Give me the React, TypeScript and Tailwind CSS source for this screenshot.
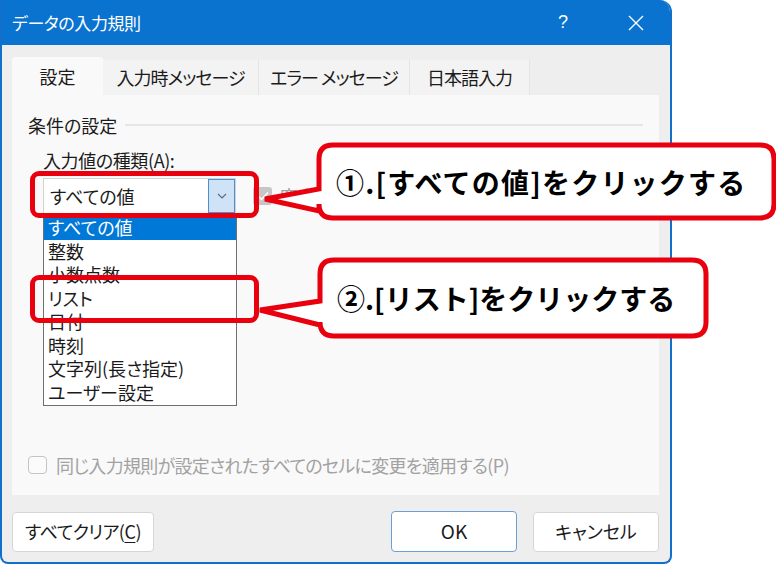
import React from "react";

const ui = "font-['Noto_Sans_CJK_JP','Noto_Sans',sans-serif] [font-feature-settings:'palt']";

function Tab({ label, active, w }: { label: string; active?: boolean; w: number }) {
  return (
    <div
      style={{ width: w }}
      className={
        active
          ? "h-[38px] bg-[#f9f9f9] flex items-center justify-center text-[18px] text-[#1b1b1b] rounded-t-[3px]"
          : "h-[35px] mt-[3px] bg-[#f3f3f3] border-r border-[#e4e4e4] flex items-center justify-center text-[18px] text-[#1b1b1b] tracking-[-1px]"
      }
    >
      {label}
    </div>
  );
}

function Callout({
  left,
  top,
  width,
  height,
  tipX,
  tipY,
  y1,
  y2,
  text,
  wide,
}: {
  left: number;
  top: number;
  width: number;
  height: number;
  tipX: number;
  tipY: number;
  y1: number;
  y2: number;
  text: string;
  wide?: boolean;
}) {
  const r = 14;
  const x0 = left;
  const x1 = left + width;
  const t = top;
  const b = top + height;
  const d = `M ${x0 + r} ${t} L ${x1 - r} ${t} Q ${x1} ${t} ${x1} ${t + r} L ${x1} ${b - r} Q ${x1} ${b} ${x1 - r} ${b} L ${x0 + r} ${b} Q ${x0} ${b} ${x0} ${b - r} L ${x0} ${y2} L ${tipX} ${tipY} L ${x0} ${y1} L ${x0} ${t + r} Q ${x0} ${t} ${x0 + r} ${t} Z`;
  return (
    <>
      <svg className="absolute left-0 top-0 pointer-events-none" width="776" height="565">
        <path d={d} fill="#ffffff" stroke="#e8000f" strokeWidth="5" strokeLinejoin="miter" />
      </svg>
      <div
        className={
          wide
            ? "absolute flex items-center pl-[17px] text-[28px] tracking-[1.2px] font-bold text-black whitespace-nowrap font-['Noto_Sans_CJK_JP',sans-serif] [font-feature-settings:normal]"
            : "absolute flex items-center pl-[17px] text-[28px] font-bold text-black whitespace-nowrap font-['Noto_Sans_CJK_JP',sans-serif] [font-feature-settings:normal]"
        }
        style={{ left, top, width, height }}
      >
        {text}
      </div>
    </>
  );
}

export default function App() {
  const items = ["すべての値", "整数", "小数点数", "リスト", "日付", "時刻", "文字列(長さ指定)", "ユーザー設定"];
  return (
    <div className={`relative w-[776px] h-[565px] bg-white overflow-hidden ${ui}`}>
      {/* Dialog */}
      <div className="w-[672px] h-[564px] flex flex-col border-x-2 border-b-2 border-[#1170cc] rounded-tr-[12px] rounded-b-[8px] overflow-hidden bg-[#eeeeee]">
        {/* Title bar */}
        <div className="h-[45px] bg-[#0a73cf] flex items-center pl-[10px] text-white text-[17px]">
          <span className="tracking-[-0.4px]">データの入力規則</span>
          <span className="ml-auto mr-[60px] text-[18px] font-['Liberation_Sans',sans-serif]">?</span>
          <svg width="16" height="16" viewBox="0 0 16 16" className="mr-[26px]">
            <path d="M1 1 L15 15 M15 1 L1 15" stroke="#ffffff" strokeWidth="1.4" fill="none" />
          </svg>
        </div>
        {/* Body */}
        <div className="flex-1 flex flex-col px-[10px]">
          <div className="flex mt-[12px]">
            <Tab label="設定" active w={91} />
            <Tab label="入力時メッセージ" w={156} />
            <Tab label="エラー メッセージ" w={151} />
            <Tab label="日本語入力" w={120} />
          </div>
          {/* Panel */}
          <div className="w-[647px] h-[400px] bg-[#f9f9f9] flex flex-col px-[16px]">
            <div className="mt-[18px] h-[24px] flex items-center text-[18px] text-[#1b1b1b]">
              <span>条件の設定</span>
              <div className="flex-1 h-[2px] bg-[#e6e6e6] ml-[8px]" />
            </div>
            <div className="mt-[11px] h-[24px] ml-[15px] flex items-center text-[18px] text-[#1b1b1b] tracking-[-0.4px]">
              入力値の種類(<span className="underline underline-offset-[3px]">A</span>):
            </div>
            <div className="mt-[6px] flex items-center">
              <div className="ml-[15px] w-[193px] h-[36px] bg-white border border-[#d2d2d2] border-b-[#8a8a8a] flex items-stretch">
                <div className="flex-1 flex items-center pl-[6px] text-[18px] text-[#1b1b1b]">すべての値</div>
                <div className="w-[27px] bg-[#cfe3f6] border border-[#4a90d4] flex items-center justify-center">
                  <svg width="10" height="6" viewBox="0 0 10 6">
                    <path d="M1 1 L5 5 L9 1" stroke="#5a6a7a" strokeWidth="1.1" fill="none" />
                  </svg>
                </div>
              </div>
              <div className="ml-[17px] w-[19px] h-[18px] rounded-[3px] bg-[#c6c6c6] flex items-center justify-center">
                <svg width="12" height="10" viewBox="0 0 12 10">
                  <path d="M1 5 L4.5 8.5 L11 1.5" stroke="#ffffff" strokeWidth="1.4" fill="none" />
                </svg>
              </div>
              <span className="ml-[8px] whitespace-nowrap text-[18px] text-[#a0a0a0]">空白を無視する</span>
            </div>
            <div className="mt-[239px] h-[24px] flex items-center text-[18px] text-[#a2a2a2]">
              <div className="w-[19px] h-[18px] rounded-[4px] border border-[#c4c4c4] bg-[#fbfbfb]" />
              <span className="ml-[9px] tracking-[-0.7px]">同じ入力規則が設定されたすべてのセルに変更を適用する(P)</span>
            </div>
          </div>
          {/* Footer */}
          <div className="mt-[16px] flex items-center">
            <div className="w-[142px] h-[40px] bg-white border border-[#d6d6d6] rounded-[4px] flex items-center justify-center text-[18px] text-[#1b1b1b] tracking-[-0.5px]">
              すべてクリア(<span className="underline underline-offset-[3px]">C</span>)
            </div>
            <div className="ml-auto w-[126px] h-[41px] bg-white border border-[#6c9fd6] rounded-[4px] flex items-center justify-center text-[19px] text-[#1b1b1b]">
              OK
            </div>
            <div className="ml-[16px] mr-[1px] w-[126px] h-[40px] bg-white border border-[#d6d6d6] rounded-[4px] flex items-center justify-center text-[18px] text-[#1b1b1b]">
              キャンセル
            </div>
          </div>
        </div>
      </div>

      {/* Dropdown list overlay */}
      <div className="absolute left-[43px] top-[215px] w-[194px] h-[191px] bg-white border border-[#6e6e6e] flex flex-col">
        {items.map((it, i) => (
          <div
            key={it}
            className={
              i === 0
                ? "h-[23.5px] shrink-0 bg-[#0078d7] text-white text-[18px] leading-[23.5px] pl-[4px]"
                : "h-[23.5px] shrink-0 text-[#1b1b1b] text-[18px] leading-[23.5px] pl-[4px]"
            }
          >
            {it}
          </div>
        ))}
      </div>

      {/* Red highlight boxes */}
      <div className="absolute left-[30px] top-[171px] w-[229px] h-[47px] border-[5px] border-[#e8000f] rounded-[9px]" />
      <div className="absolute left-[30px] top-[275px] w-[229px] h-[48px] border-[5px] border-[#e8000f] rounded-[9px]" />

      {/* Callouts */}
      <Callout left={319} top={145} width={455} height={73} tipX={265} tipY={199} y1={189} y2={211} text="①.[すべての値]をクリックする" wide />
      <Callout left={320} top={260} width={386} height={76} tipX={260} tipY={310} y1={301} y2={325} text="②.[リスト]をクリックする" />
    </div>
  );
}
